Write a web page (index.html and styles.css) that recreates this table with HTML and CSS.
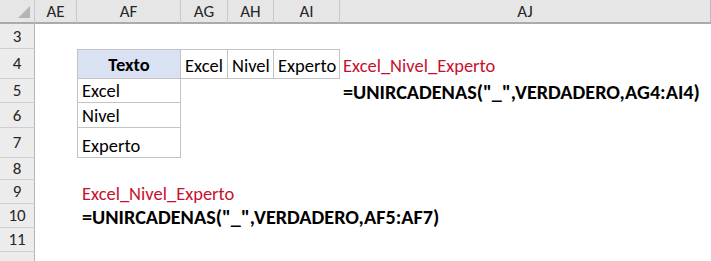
FILE: index.html
```html
<!DOCTYPE html>
<html lang="es">
<head>
<meta charset="utf-8">
<link rel="stylesheet" href="styles.css">
</head>
<body>
<div class="sheet">
  <div class="corner hd"><span class="tri"></span></div>
  <div class="ch hd">AE</div>
  <div class="ch hd">AF</div>
  <div class="ch hd">AG</div>
  <div class="ch hd">AH</div>
  <div class="ch hd">AI</div>
  <div class="ch hd last">AJ</div>

  <div class="rh">3</div>
  <div class="c span6"></div>

  <div class="rh">4</div>
  <div class="c"></div>
  <div class="c t th bl">Texto</div>
  <div class="c t bt">Excel</div>
  <div class="c t bt">Nivel</div>
  <div class="c t bt">Experto</div>
  <div class="c red pad">Excel_Nivel_Experto</div>

  <div class="rh">5</div>
  <div class="c"></div>
  <div class="c t bl nt">Excel</div>
  <div class="c span3"></div>
  <div class="c formula pad">=UNIRCADENAS("_",VERDADERO,AG4:AI4)</div>

  <div class="rh">6</div>
  <div class="c"></div>
  <div class="c t bl nt">Nivel</div>
  <div class="c span4"></div>

  <div class="rh">7</div>
  <div class="c"></div>
  <div class="c t bl low">Experto</div>
  <div class="c span4"></div>

  <div class="rh">8</div>
  <div class="c span6"></div>

  <div class="rh">9</div>
  <div class="c"></div>
  <div class="c red over">Excel_Nivel_Experto</div>
  <div class="c span4"></div>

  <div class="rh">10</div>
  <div class="c"></div>
  <div class="c formula over">=UNIRCADENAS("_",VERDADERO,AF5:AF7)</div>
  <div class="c span4"></div>

  <div class="rh">11</div>
  <div class="c span6"></div>

  <div class="rh"></div>
  <div class="c span6"></div>
</div>
</body>
</html>
```

FILE: styles.css
```css
* { box-sizing: border-box; }
html, body { margin: 0; padding: 0; background: #fff; }
body {
  font-family: Carlito, Lato, "Liberation Sans", sans-serif;
  color: #000;
  overflow: hidden;
}
.sheet {
  display: grid;
  grid-template-columns: 35px 42px 104px 47px 46px 66px 371px;
  grid-template-rows: 24px 25px 30px 24px 25px 30px 22px 24px 24px 24px 24px;
  width: 711px;
  height: 261px;
  overflow: hidden;
}
.hd {
  background: #e6e6e6;
  border-bottom: 2px solid #ababab;
}
.corner {
  position: relative;
  border-right: 1px solid #c8c8c8;
}
.tri {
  position: absolute;
  right: 4px;
  bottom: 4px;
  width: 0;
  height: 0;
  border-left: 12px solid transparent;
  border-bottom: 12px solid #b4b4b4;
}
.ch {
  display: flex;
  align-items: center;
  justify-content: center;
  font-size: 17px;
  color: #262626;
  border-right: 1px solid #c8c8c8;
  padding-top: 1px;
}
.ch.last { border-right: 1px solid #bcbcbc; }
.rh {
  background: #ececec;
  border-right: 1px solid #b5b5b5;
  border-bottom: 1px solid #cfcfcf;
  display: flex;
  align-items: center;
  justify-content: center;
  font-size: 17px;
  color: #262626;
}
.c {
  display: flex;
  align-items: center;
  font-size: 18.5px;
  white-space: nowrap;
  min-width: 0;
}
.span3 { grid-column: span 3; }
.span4 { grid-column: span 4; }
.span6 { grid-column: span 6; }
.t {
  border-right: 1px solid #c3c3c3;
  border-bottom: 1px solid #c3c3c3;
  padding: 3px 4px 0 4px;
}
.bt { border-top: 1px solid #c3c3c3; }
.bl { border-left: 1px solid #c3c3c3; }
.nt { padding-top: 0; }
.low { padding-top: 6px; }
.th {
  background: #d9e1f2;
  border-top: 1px solid #c3c3c3;
  font-weight: 700;
  justify-content: center;
  padding-top: 0;
}
.red { color: #c8102e; padding-top: 3px; }
.pad { padding-left: 3px; }
.formula { font-weight: 700; font-size: 20.2px; padding-top: 1px; }
.over { overflow: visible; padding-left: 5px; }
```
